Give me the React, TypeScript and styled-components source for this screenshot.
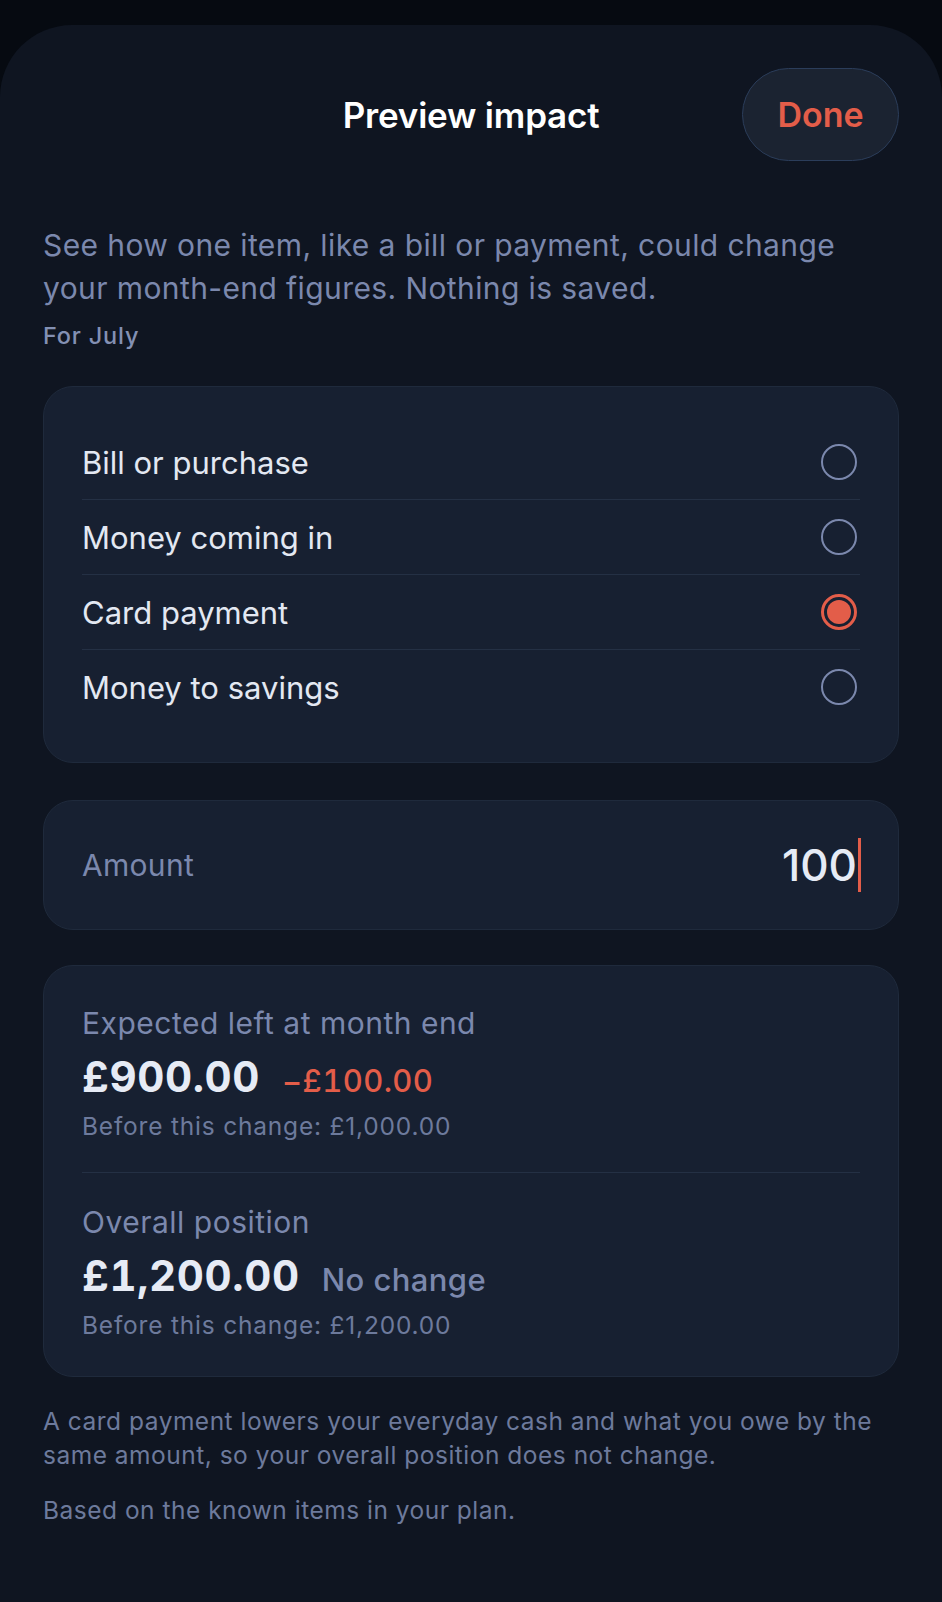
import React from "react";
import styled, { createGlobalStyle } from "styled-components";

const GlobalStyle = createGlobalStyle`
  html, body {
    margin: 0;
    padding: 0;
    background: #060a11;
  }
  body {
    font-family: Inter, "Noto Sans", "Liberation Sans", sans-serif;
    -webkit-font-smoothing: antialiased;
  }
`;

const Screen = styled.div`
  padding-top: 25px;
  min-height: 1602px;
  box-sizing: border-box;
`;

const Sheet = styled.div`
  background: #0f1521;
  border-radius: 72px 72px 0 0;
  min-height: 1577px;
  padding: 43px 43px 0;
  box-sizing: border-box;
`;

const Header = styled.div`
  display: grid;
  grid-template-columns: 1fr auto 1fr;
  align-items: center;
  height: 93px;
`;

const Title = styled.h1`
  grid-column: 2;
  margin: 0;
  font-size: 35px;
  font-weight: 600;
  color: #ffffff;
  letter-spacing: -0.2px;
`;

const DoneButton = styled.button`
  grid-column: 3;
  justify-self: end;
  width: 157px;
  height: 93px;
  border-radius: 47px;
  background: #1b2331;
  border: 1.5px solid #2b3d5a;
  color: #e35d49;
  font-family: inherit;
  font-size: 34px;
  font-weight: 600;
  cursor: pointer;
`;

const Intro = styled.p`
  margin: 63px 0 0;
  max-width: 800px;
  font-size: 30px;
  line-height: 43px;
  letter-spacing: 0.4px;
  color: #7b88ad;
`;

const MonthTag = styled.div`
  margin-top: 11px;
  font-size: 23.5px;
  line-height: 30px;
  font-weight: 500;
  letter-spacing: 0.8px;
  color: #8390b3;
`;

const Card = styled.div<{ $pad?: string }>`
  background: #172031;
  border: 1px solid #1f2a3c;
  border-radius: 30px;
  padding: ${(p) => p.$pad ?? "38px"};
`;

const OptionsCard = styled(Card)`
  margin-top: 35px;
`;

const OptionRow = styled.label`
  display: flex;
  align-items: center;
  justify-content: space-between;
  height: 74px;
  font-size: 31px;
  color: #e3e8f2;
  cursor: pointer;

  & + & {
    border-top: 1px solid #243044;
  }
`;

const Radio = styled.span<{ $on: boolean }>`
  width: 36px;
  height: 36px;
  box-sizing: border-box;
  border-radius: 50%;
  border: ${(p) => (p.$on ? "3px solid #e35d49" : "2.5px solid #7b88ad")};
  margin-right: 3px;
  display: flex;
  align-items: center;
  justify-content: center;

  &::after {
    content: "";
    display: ${(p) => (p.$on ? "block" : "none")};
    width: 24px;
    height: 24px;
    border-radius: 50%;
    background: #e35d49;
  }
`;

const AmountCard = styled(Card)`
  margin-top: 37px;
  height: 130px;
  box-sizing: border-box;
  display: flex;
  align-items: center;
  justify-content: space-between;
`;

const AmountLabel = styled.span`
  font-size: 30px;
  letter-spacing: 0.3px;
  color: #7b88ad;
`;

const AmountValue = styled.span`
  display: flex;
  align-items: center;
  font-size: 44px;
  font-weight: 500;
  color: #e6ebf5;
  margin-right: -1px;
`;

const Caret = styled.span`
  width: 3px;
  height: 54px;
  background: #e35d49;
  margin-left: 1px;
`;

const ResultsCard = styled(Card)`
  margin-top: 35px;
`;

const Section = styled.div`
  & + & {
    margin-top: 31px;
    padding-top: 30px;
    border-top: 1px solid #243044;
  }
`;

const SectionLabel = styled.div`
  font-size: 30px;
  line-height: 38px;
  letter-spacing: 0.5px;
  color: #7b88ad;
`;

const FigureRow = styled.div`
  display: flex;
  align-items: baseline;
  gap: 22px;
  margin-top: 10px;
  line-height: 50px;
  font-feature-settings: "tnum";
`;

const Figure = styled.span`
  font-size: 42px;
  font-weight: 700;
  letter-spacing: 0.6px;
  color: #e6ebf5;
`;

const Delta = styled.span<{ $tone: "down" | "flat" }>`
  font-size: 31px;
  font-weight: 500;
  letter-spacing: 0.4px;
  color: ${(p) => (p.$tone === "down" ? "#e35d49" : "#7b88ad")};
`;

const Before = styled.div`
  margin-top: 5px;
  font-size: 24.5px;
  line-height: 30px;
  letter-spacing: 0.8px;
  color: #6d7a9c;
`;

const Note = styled.p<{ $gap: number }>`
  margin: ${(p) => p.$gap}px 0 0;
  max-width: 840px;
  font-size: 24.5px;
  line-height: 34px;
  letter-spacing: 0.5px;
  color: #6d7a9c;
`;

const options = [
  "Bill or purchase",
  "Money coming in",
  "Card payment",
  "Money to savings",
];

export default function App() {
  const [selected, setSelected] = React.useState("Card payment");

  return (
    <>
      <GlobalStyle />
      <Screen>
        <Sheet>
          <Header>
            <Title>Preview impact</Title>
            <DoneButton>Done</DoneButton>
          </Header>

          <Intro>
            See how one item, like a bill or payment, could change your
            month-end figures. Nothing is saved.
          </Intro>
          <MonthTag>For July</MonthTag>

          <OptionsCard $pad="38px">
            {options.map((o) => (
              <OptionRow key={o} onClick={() => setSelected(o)}>
                {o}
                <Radio $on={selected === o} />
              </OptionRow>
            ))}
          </OptionsCard>

          <AmountCard $pad="0 38px">
            <AmountLabel>Amount</AmountLabel>
            <AmountValue>
              100
              <Caret />
            </AmountValue>
          </AmountCard>

          <ResultsCard $pad="38px 38px 36px">
            <Section>
              <SectionLabel>Expected left at month end</SectionLabel>
              <FigureRow>
                <Figure>£900.00</Figure>
                <Delta $tone="down">−£100.00</Delta>
              </FigureRow>
              <Before>Before this change: £1,000.00</Before>
            </Section>
            <Section>
              <SectionLabel>Overall position</SectionLabel>
              <FigureRow>
                <Figure>£1,200.00</Figure>
                <Delta $tone="flat">No change</Delta>
              </FigureRow>
              <Before>Before this change: £1,200.00</Before>
            </Section>
          </ResultsCard>

          <Note $gap={27}>
            A card payment lowers your everyday cash and what you owe by the
            same amount, so your overall position does not change.
          </Note>
          <Note $gap={21}>Based on the known items in your plan.</Note>
        </Sheet>
      </Screen>
    </>
  );
}
